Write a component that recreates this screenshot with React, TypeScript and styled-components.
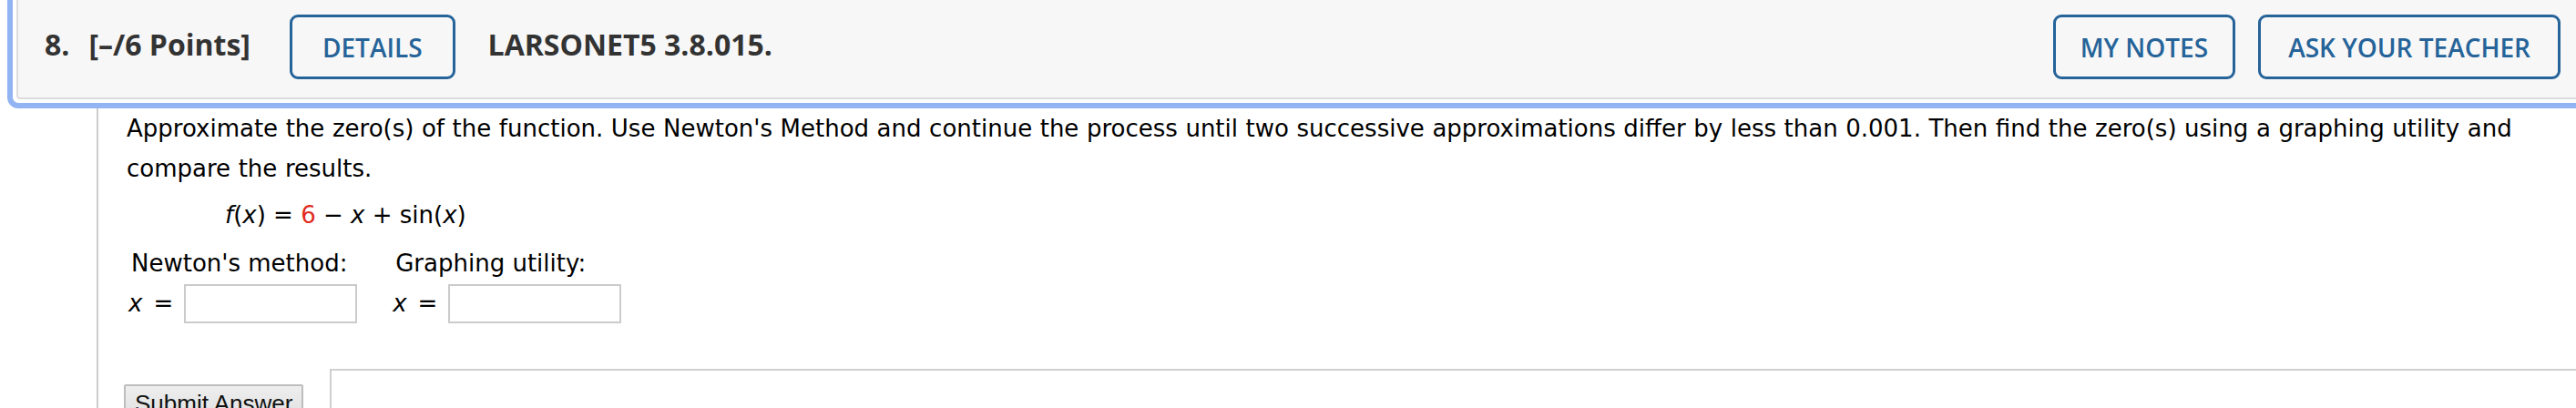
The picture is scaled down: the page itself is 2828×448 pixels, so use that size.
import React from "react";
import styled, { createGlobalStyle } from "styled-components";

const Global = createGlobalStyle`
  html, body {
    margin: 0;
    padding: 0;
    background: #ffffff;
    overflow: hidden;
  }
`;

const Page = styled.div`
  width: 2828px;
  height: 448px;
  overflow: hidden;
  background: #ffffff;
`;

const Card = styled.section`
  margin: -16px -25px 0 8px;
  border: 6px solid #92b4f2;
  border-radius: 12px;
  padding: 4px;
`;

const Header = styled.header`
  display: flex;
  align-items: center;
  background: #f7f7f7;
  border: 2px solid #dcdcdc;
  border-radius: 4px;
  padding: 20px 30px 20px 29px;
  font-family: "Open Sans", "Liberation Sans", sans-serif;
  color: #333333;
`;

const HeadText = styled.span<{ $gap?: number }>`
  font-size: 32px;
  font-weight: 700;
  white-space: nowrap;
  margin-left: ${(p) => p.$gap ?? 0}px;
  margin-bottom: 6px;
`;

const OutlineButton = styled.button<{ $gap?: number; $push?: boolean; $pad?: number }>`
  height: 71px;
  box-sizing: border-box;
  padding: 0 ${(p) => p.$pad ?? 30}px;
  margin-left: ${(p) => (p.$push ? "auto" : `${p.$gap ?? 0}px`)};
  border: 3px solid #256399;
  border-radius: 9px;
  background: transparent;
  color: #256399;
  font-family: "Open Sans", "Liberation Sans", sans-serif;
  font-size: 28px;
  font-weight: 600;
  white-space: nowrap;
  cursor: pointer;
`;

const Body = styled.div`
  margin-left: 106px;
  border-left: 2px solid #cccccc;
  padding: 0 0 0 31px;
  font-family: "DejaVu Sans", Verdana, sans-serif;
  font-size: 26px;
  color: #000000;
  min-height: 340px;
`;

const Prompt = styled.p`
  margin: 0;
  padding-right: 20px;
  line-height: 44px;
  word-spacing: 0.3px;
`;

const Formula = styled.div`
  margin-top: 7px;
  padding-left: 108px;
  line-height: 44px;
`;

const Var = styled.i`
  font-style: italic;
`;

const Given = styled.span`
  color: #e02b20;
`;

const AnswerGrid = styled.div`
  display: grid;
  grid-template-columns: auto auto;
  justify-content: start;
  column-gap: 37px;
  margin-top: 9px;
`;

const Label = styled.div`
  line-height: 44px;
  padding-left: 5px;
`;

const Field = styled.label`
  display: flex;
  align-items: center;
  gap: 12px;
  line-height: 44px;
  padding-left: 2px;
`;

const Box = styled.input`
  width: 190px;
  height: 43px;
  box-sizing: border-box;
  border: 2px solid #cbcbcb;
  background: #ffffff;
  font: inherit;
`;

const SubmitRow = styled.div`
  display: flex;
  align-items: flex-start;
  gap: 29px;
  margin-top: 50px;
  margin-left: -3px;
`;

const SubmitButton = styled.button`
  margin-top: 17px;
  padding: 4px 10px 10px;
  border: 2px solid #bdbdbd;
  border-radius: 2px;
  background: linear-gradient(#eeeeee, #dddddd);
  font-family: "Liberation Sans", Arial, sans-serif;
  font-size: 26px;
  color: #111111;
  white-space: nowrap;
`;

const Feedback = styled.div`
  flex: 1;
  height: 120px;
  border: 2px solid #cfcfcf;
  border-right: none;
  margin-right: -40px;
`;

export default function App() {
  return (
    <Page>
      <Global />
      <Card>
        <Header>
          <HeadText>8.</HeadText>
          <HeadText $gap={21}>[–/6 Points]</HeadText>
          <OutlineButton $gap={43} $pad={33}>DETAILS</OutlineButton>
          <HeadText $gap={36}>LARSONET5 3.8.015.</HeadText>
          <OutlineButton $push $pad={27}>MY NOTES</OutlineButton>
          <OutlineButton $gap={25}>ASK YOUR TEACHER</OutlineButton>
        </Header>
      </Card>
      <Body>
        <Prompt>
          Approximate the zero(s) of the function. Use Newton's Method and continue the process until two
          successive approximations differ by less than 0.001. Then find the zero(s) using a graphing utility
          and compare the results.
        </Prompt>
        <Formula>
          <Var>f</Var>(<Var>x</Var>) = <Given>6</Given> − <Var>x</Var> + sin(<Var>x</Var>)
        </Formula>
        <AnswerGrid>
          <Label>Newton's method:</Label>
          <Label>Graphing utility:</Label>
          <Field>
            <Var>x</Var> =<Box type="text" />
          </Field>
          <Field>
            <Var>x</Var> =<Box type="text" />
          </Field>
        </AnswerGrid>
        <SubmitRow>
          <SubmitButton>Submit Answer</SubmitButton>
          <Feedback />
        </SubmitRow>
      </Body>
    </Page>
  );
}
